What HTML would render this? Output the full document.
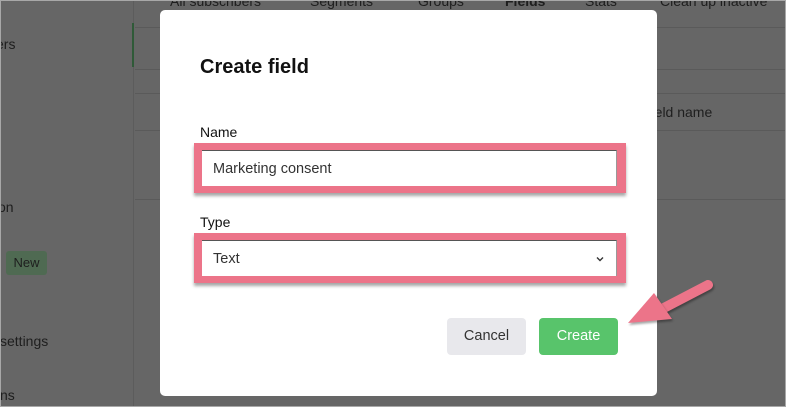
<!DOCTYPE html>
<html><head><meta charset="utf-8"><style>
*{box-sizing:border-box;margin:0;padding:0}
body{width:786px;height:407px;overflow:hidden;background:#666;font-family:"Liberation Sans",Arial,sans-serif;position:relative}
.frame{position:absolute;inset:0;border:1px solid #a8a8a8;z-index:10;pointer-events:none}
.t{position:absolute;color:#1e1e1e;font-size:14px;white-space:nowrap}
.line{position:absolute;left:135px;right:0;height:1px;background:#5a5a5a}
.modal{position:absolute;left:160px;top:10px;width:497px;height:386px;background:#fff;border-radius:5px}
.pink{position:absolute;left:194px;width:432px;height:50px;background:#ec7489;box-shadow:0 3px 3px rgba(0,0,0,.35)}
.inp{position:absolute;left:8px;top:7px;width:415px;height:36px;background:#fff;border-top:1px solid #555;border-right:1px solid #999;font-size:14.5px;color:#333;padding:10px 0 0 11px}
.btn{position:absolute;top:318px;height:37px;border-radius:4px;font-size:14.5px;text-align:center;line-height:37px}
</style></head><body>
<div class="frame"></div>
<div style="position:absolute;left:133px;top:0;width:1px;height:407px;background:#5c5c5c"></div>
<div style="position:absolute;left:132px;top:23px;width:2px;height:44px;background:#2f5a38"></div>
<div class="t" style="left:-4px;top:36px">ers</div>
<div class="t" style="left:-2px;top:199px">on</div>
<div style="position:absolute;left:6px;top:251px;width:41px;height:24px;background:#4f6a52;border-radius:3px;font-size:13px;color:#1e1e1e;text-align:center;line-height:24px">New</div>
<div class="t" style="left:0;top:333px">settings</div>
<div class="t" style="left:0;top:387px">ns</div>
<div class="t" style="left:170px;top:-7px">All subscribers</div>
<div class="t" style="left:310px;top:-7px">Segments</div>
<div class="t" style="left:418px;top:-7px">Groups</div>
<div class="t" style="left:505px;top:-7px;font-weight:bold">Fields</div>
<div class="t" style="left:585px;top:-7px">Stats</div>
<div class="t" style="left:660px;top:-7px">Clean up inactive</div>
<div class="line" style="top:27px"></div>
<div class="line" style="top:69px"></div>
<div class="line" style="top:93px"></div>
<div class="line" style="top:130px"></div>
<div class="line" style="top:199px"></div>
<div class="t" style="left:643px;top:104px">Field name</div>
<div class="modal"></div>
<div class="t" style="left:200px;top:56px;font-size:20px;font-weight:bold;color:#111">Create field</div>
<div class="t" style="left:200px;top:124px;font-size:14px;color:#111">Name</div>
<div class="pink" style="top:143px"><div class="inp">Marketing consent</div></div>
<div class="t" style="left:200px;top:214px;font-size:14px;color:#111">Type</div>
<div class="pink" style="top:233px"><div class="inp">Text<svg style="position:absolute;right:12px;top:15px" width="8" height="6" viewBox="0 0 8 6"><path d="M1 1.5L4 4.5L7 1.5" stroke="#333" stroke-width="1.4" fill="none"/></svg></div></div>
<div class="btn" style="left:447px;width:79px;background:#e8e8ec;color:#333">Cancel</div>
<div class="btn" style="left:539px;width:79px;background:#58c46b;color:#fff">Create</div>
<svg style="position:absolute;left:620px;top:275px" width="100" height="60" viewBox="0 0 100 60">
<path d="M88 10 L40 35" stroke="#ec7489" stroke-width="10" stroke-linecap="round" fill="none" filter="drop-shadow(1px 2px 1px rgba(0,0,0,.35))"/>
<path d="M8 48 L34 18 L52 44 Z" fill="#ec7489" filter="drop-shadow(1px 2px 1px rgba(0,0,0,.35))"/>
</svg>
</body></html>
